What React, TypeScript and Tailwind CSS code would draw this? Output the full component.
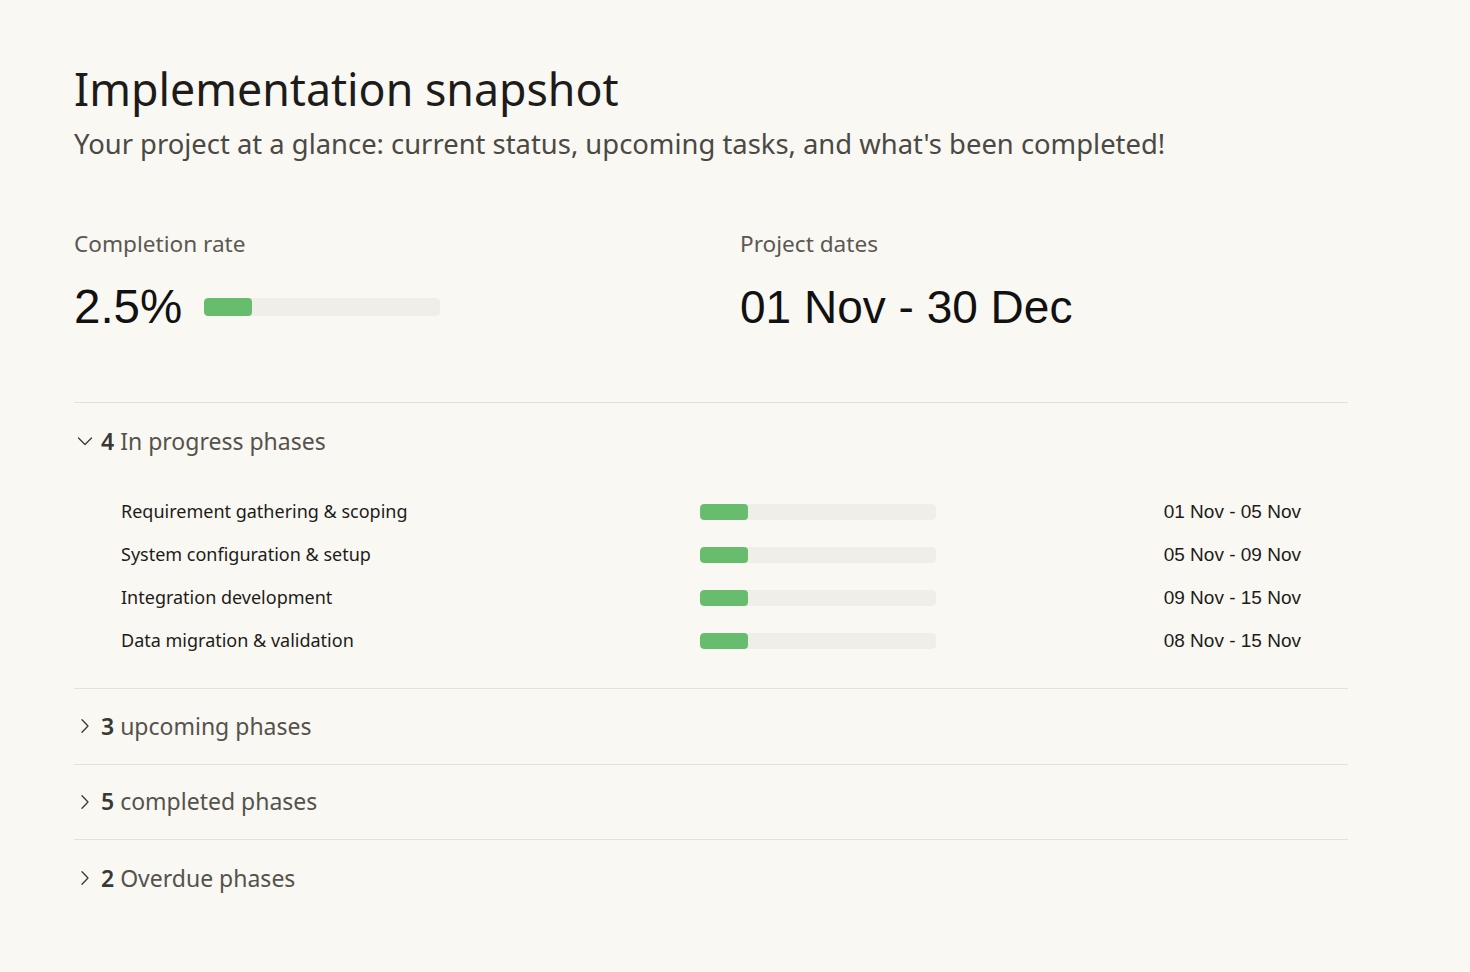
import React from "react";

const plex = { fontFamily: '"Noto Sans", "Open Sans", sans-serif' };
const grot = { fontFamily: '"Liberation Sans", Arial, sans-serif' };

function Chevron({ open }: { open: boolean }) {
  return (
    <svg width="16" height="16" viewBox="0 0 16 16" fill="none" className="shrink-0">
      {open ? (
        <path d="M1.5 5L8 11.5L14.5 5" stroke="#3a3835" strokeWidth="1.3" strokeLinecap="round" strokeLinejoin="round" />
      ) : (
        <path d="M5 1.8L11 8L5 14.2" stroke="#3a3835" strokeWidth="1.3" strokeLinecap="round" strokeLinejoin="round" />
      )}
    </svg>
  );
}

function Bar({ className = "" }: { className?: string }) {
  return (
    <div className={`w-[236px] bg-[#f0eee9] rounded-[4px] overflow-hidden ${className}`}>
      <div className="h-full w-[48px] bg-[#67bd6d] rounded-[4px]" />
    </div>
  );
}

const rows = [
  ["Requirement gathering & scoping", "01 Nov - 05 Nov"],
  ["System configuration & setup", "05 Nov - 09 Nov"],
  ["Integration development", "09 Nov - 15 Nov"],
  ["Data migration & validation", "08 Nov - 15 Nov"],
];

function SectionHeader({ n, label, open }: { n: string; label: string; open: boolean }) {
  return (
    <div className="flex items-center gap-[8px] pl-[3px] text-[23px] text-[#55524d]" style={plex}>
      <Chevron open={open} />
      <span>
        <span className="font-semibold text-[#3a3835]">{n}</span> {label}
      </span>
    </div>
  );
}

export default function App() {
  return (
    <div className="min-h-[972px] w-full bg-[#faf8f3]" style={plex}>
      <div className="pl-[74px] pt-[61px] w-[1348px]">
        <h1 className="text-[44.7px] leading-[56px] text-[#1d1c1a] font-normal">Implementation snapshot</h1>
        <p className="mt-[9px] text-[27.4px] leading-[36px] text-[#4b4944]">
          Your project at a glance: current status, upcoming tasks, and what's been completed!
        </p>

        <div className="mt-[68px] flex">
          <div className="w-[666px]">
            <div className="text-[22.6px] leading-[28px] text-[#5b5853]">Completion rate</div>
            <div className="mt-[21px] flex items-center gap-[22px]">
              <span className="text-[47.5px] leading-[56px] text-[#111]" style={grot}>
                2.5%
              </span>
              <Bar className="h-[18px]" />
            </div>
          </div>
          <div>
            <div className="text-[22.6px] leading-[28px] text-[#5b5853]">Project dates</div>
            <div className="mt-[21px] text-[46px] leading-[56px] text-[#111]" style={grot}>
              01 Nov - 30 Dec
            </div>
          </div>
        </div>

        <div className="mt-[67px] border-t border-[#e4e1db]">
          <div className="pt-[21px] pb-[43px]">
            <SectionHeader n="4" label="In progress phases" open />
            <div className="mt-[39px] flex flex-col gap-[25px]">
              {rows.map(([name, date]) => (
                <div key={name} className="grid grid-cols-[579px_236px_1fr] items-center pl-[47px] pr-[47px] h-[18px]">
                  <span className="text-[18px] text-[#1d1c1a]">{name}</span>
                  <Bar className="h-[16px]" />
                  <span className="text-right text-[19px] text-[#1d1c1a]" style={grot}>
                    {date}
                  </span>
                </div>
              ))}
            </div>
          </div>
          <div className="border-t border-[#e4e1db] h-[76px] flex items-center">
            <SectionHeader n="3" label="upcoming phases" open={false} />
          </div>
          <div className="border-t border-[#e4e1db] h-[75px] flex items-center">
            <SectionHeader n="5" label="completed phases" open={false} />
          </div>
          <div className="border-t border-[#e4e1db] h-[78px] flex items-center">
            <SectionHeader n="2" label="Overdue phases" open={false} />
          </div>
        </div>
      </div>
    </div>
  );
}
